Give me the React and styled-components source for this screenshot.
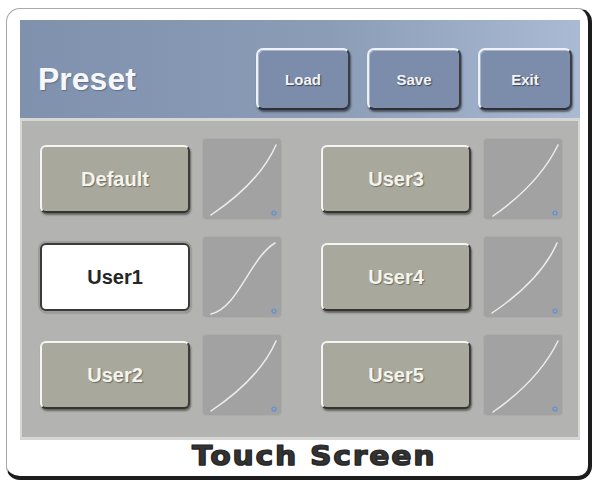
import styled, { createGlobalStyle } from "styled-components";

const GlobalStyle = createGlobalStyle`
  html, body {
    margin: 0;
    padding: 0;
    background: #ffffff;
  }
  * {
    box-sizing: border-box;
  }
`;

const Frame = styled.div`
  margin: 8px 0 0 6px;
  width: 586px;
  height: 472px;
  background: #ffffff;
  border-radius: 14px;
  border: 1px solid #a8a8a8;
  border-right: 4px solid #1c1c1c;
  border-bottom: 4px solid #1c1c1c;
  padding: 11px 8px 0 13px;
  display: flex;
  flex-direction: column;
  font-family: "Liberation Sans", Arial, sans-serif;
`;

const Panel = styled.div`
  height: 420px;
  display: flex;
  flex-direction: column;
  background: #d6d6d3;
  border-left: 2px solid #d6d6d3;
  border-right: 2px solid #d6d6d3;
`;

const Header = styled.div`
  height: 98px;
  margin: 0 -2px;
  display: flex;
  align-items: center;
  gap: 17px;
  padding: 20px 8px 0 18px;
  background: linear-gradient(90deg, #7f91ad 0%, #8b9cb7 55%, #aabad4 100%);
`;

const Title = styled.div`
  margin-right: auto;
  font-size: 32px;
  font-weight: bold;
  color: #f6f7fa;
  text-shadow: 1px 1px 1px rgba(60, 70, 90, 0.5);
`;

const ToolButton = styled.div`
  width: 94px;
  height: 62px;
  display: flex;
  align-items: center;
  justify-content: center;
  border-radius: 7px;
  background: #7b8dab;
  border: 2px solid;
  border-color: #eef1f6 #3a3d44 #2e3036 #eef1f6;
  box-shadow: 1px 2px 2px rgba(20, 20, 30, 0.55), inset 1px 1px 0 rgba(255, 255, 255, 0.35);
  font-size: 15px;
  font-weight: bold;
  color: #f3f4f7;
  text-shadow: 1px 1px 1px #3b4255;
`;

const Content = styled.div`
  margin-top: 3px;
  height: 316px;
  background: #b3b3b1;
  display: grid;
  grid-template-columns: auto auto;
  justify-content: start;
  column-gap: 39px;
  row-gap: 16px;
  padding: 17px 0 0 18px;
  align-content: start;
`;

const Slot = styled.div`
  display: flex;
  align-items: center;
  gap: 12px;
`;

const PresetButton = styled.div`
  width: 150px;
  height: 68px;
  display: flex;
  align-items: center;
  justify-content: center;
  border-radius: 6px;
  font-size: 20px;
  font-weight: bold;
  background: ${(p) => (p.$active ? "#ffffff" : "#a9a89c")};
  color: ${(p) => (p.$active ? "#262626" : "#f4f4ee")};
  border: 2px solid;
  border-color: ${(p) =>
    p.$active
      ? "#3a3a3a"
      : "#f5f5f1 #3c3c34 #34342e #f5f5f1"};
  box-shadow: ${(p) =>
    p.$active
      ? "0 0 0 2px #9c9c98, 1px 2px 2px rgba(0,0,0,0.4)"
      : "1px 2px 2px rgba(0, 0, 0, 0.45)"};
  text-shadow: ${(p) => (p.$active ? "none" : "1px 1px 1px rgba(70, 70, 60, 0.6)")};
`;

const Thumb = styled.div`
  width: 80px;
  height: 82px;
  border-radius: 5px;
  background: #a2a2a2;
  box-shadow: inset 0 0 0 1px #acacab;

  svg {
    display: block;
  }
`;

const Footer = styled.div`
  flex: 1;
  display: flex;
  align-items: center;
  justify-content: center;
  padding: 0 0 4px 28px;
`;

const Brand = styled.div`
  font-family: "DejaVu Sans", "Liberation Sans", sans-serif;
  font-size: 26px;
  font-weight: bold;
  letter-spacing: 1.5px;
  transform: scaleX(1.15);
  color: #333333;
  -webkit-text-stroke: 1.2px #262626;
  text-shadow: 0 1px 0 #777777;
`;

// gamma curves drawn inside each preset thumbnail
const curves = {
  soft: "M9 77 Q 58 44 74 7",
  sShape: "M9 78 C 36 72, 48 22, 73 7",
  steep: "M10 78 Q 56 46 75 7",
};

const Curve = ({ shape }) => (
  <Thumb>
    <svg width="80" height="82" viewBox="0 0 80 82">
      <path
        d={curves[shape]}
        fill="none"
        stroke="#ececec"
        strokeWidth="1.5"
        strokeLinecap="round"
      />
      <circle cx="72" cy="75" r="2" fill="none" stroke="#5f8fd6" strokeWidth="1.2" />
    </svg>
  </Thumb>
);

const presets = [
  { name: "Default", curve: "soft" },
  { name: "User3", curve: "steep" },
  { name: "User1", curve: "sShape", active: true },
  { name: "User4", curve: "soft" },
  { name: "User2", curve: "soft" },
  { name: "User5", curve: "steep" },
];

export default function App() {
  return (
    <>
      <GlobalStyle />
      <Frame>
        <Panel>
          <Header>
            <Title>Preset</Title>
            <ToolButton>Load</ToolButton>
            <ToolButton>Save</ToolButton>
            <ToolButton>Exit</ToolButton>
          </Header>
          <Content>
            {presets.map((p) => (
              <Slot key={p.name}>
                <PresetButton $active={p.active}>{p.name}</PresetButton>
                <Curve shape={p.curve} />
              </Slot>
            ))}
          </Content>
        </Panel>
        <Footer>
          <Brand>Touch Screen</Brand>
        </Footer>
      </Frame>
    </>
  );
}
